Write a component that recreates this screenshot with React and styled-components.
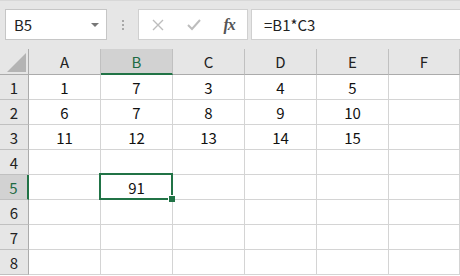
import React from "react";
import styled, { createGlobalStyle } from "styled-components";

const Global = createGlobalStyle`
  html, body { margin: 0; padding: 0; background: #ffffff; overflow: hidden; }
  body { width: 460px; height: 276px; font-family: "Noto Sans CJK JP", "Noto Sans", sans-serif; }
`;

const Page = styled.div`
  width: 460px;
  height: 276px;
  overflow: hidden;
  display: flex;
  flex-direction: column;
`;

const Toolbar = styled.div`
  height: 49px;
  flex: none;
  background: #e6e6e6;
  border-top: 1px solid #d8d8d8;
  box-sizing: border-box;
  display: flex;
  align-items: flex-start;
  padding: 8px 0 0 5px;
`;

const NameBox = styled.div`
  width: 102px;
  height: 31px;
  box-sizing: border-box;
  background: #fff;
  border: 1px solid #c6c6c6;
  display: flex;
  align-items: center;
  justify-content: space-between;
  padding: 0 7px 0 8px;
  font-size: 15px;
  color: #222;
`;

const Arrow = styled.span`
  width: 0;
  height: 0;
  border-left: 4px solid transparent;
  border-right: 4px solid transparent;
  border-top: 4px solid #777;
`;

const Dots = styled.div`
  width: 31px;
  height: 31px;
  display: flex;
  flex-direction: column;
  align-items: center;
  justify-content: center;
  gap: 2px;
  & > span { width: 2px; height: 2px; background: #a8a8a8; }
`;

const ButtonBox = styled.div`
  width: 110px;
  height: 31px;
  box-sizing: border-box;
  background: #fff;
  border: 1px solid #d0d0d0;
  display: flex;
  align-items: center;
  padding-left: 1px;
`;

const Slot = styled.span`
  width: 36px;
  height: 29px;
  display: flex;
  align-items: center;
  justify-content: center;
`;

const Fx = styled.span`
  font-family: "Liberation Serif", serif;
  font-style: italic;
  font-size: 16px;
  color: #555;
  font-weight: bold;
  letter-spacing: -1px;
`;

const FormulaBox = styled.div`
  flex: 1;
  height: 31px;
  margin-left: 3px;
  box-sizing: border-box;
  background: #fff;
  border: 1px solid #d0d0d0;
  border-right: none;
  display: flex;
  align-items: center;
  padding-left: 12px;
  font-size: 15px;
  color: #222;
`;

const Grid = styled.div`
  flex: 1;
  display: grid;
  grid-template-columns: 29px repeat(5, 72px) 1fr;
  grid-template-rows: 26px;
  grid-auto-rows: 25px;
  background: #fff;
`;

const Corner = styled.div`
  background: #e6e6e6;
  border-right: 1px solid #ababab;
  border-bottom: 1px solid #ababab;
  box-sizing: border-box;
  display: flex;
  align-items: flex-end;
  justify-content: flex-end;
  padding: 0 2px 2px 0;
`;

const ColHead = styled.div`
  background: ${(p) => (p.$active ? "#d2d2d2" : "#e6e6e6")};
  color: ${(p) => (p.$active ? "#1e6b43" : "#222")};
  border-right: 1px solid #c0c0c0;
  border-bottom: ${(p) => (p.$active ? "2px solid #217346" : "1px solid #ababab")};
  box-sizing: border-box;
  display: flex;
  align-items: center;
  justify-content: center;
  font-size: 15px;
  padding-top: ${(p) => (p.$active ? "1px" : "0")};
`;

const RowHead = styled.div`
  background: ${(p) => (p.$active ? "#d2d2d2" : "#e6e6e6")};
  color: ${(p) => (p.$active ? "#1e6b43" : "#222")};
  border-right: ${(p) => (p.$active ? "2px solid #217346" : "1px solid #ababab")};
  border-bottom: 1px solid #c0c0c0;
  box-sizing: border-box;
  display: flex;
  align-items: center;
  justify-content: center;
  font-size: 15px;
`;

const Cell = styled.div`
  position: relative;
  border-right: 1px solid #d4d4d4;
  border-bottom: 1px solid #d4d4d4;
  box-sizing: border-box;
  display: flex;
  align-items: center;
  justify-content: center;
  font-size: 15px;
  color: #111;
`;

const Selection = styled.div`
  position: absolute;
  z-index: 2;
  left: -2px;
  top: -2px;
  right: -1px;
  bottom: -1px;
  border: 2px solid #217346;
  pointer-events: none;
`;

const Handle = styled.div`
  position: absolute;
  right: -4px;
  bottom: -4px;
  width: 6px;
  height: 6px;
  background: #217346;
  border: 1px solid #fff;
  border-right: none;
  border-bottom: none;
`;

const cols = ["A", "B", "C", "D", "E", "F"];
const data = [
  [1, 7, 3, 4, 5, ""],
  [6, 7, 8, 9, 10, ""],
  [11, 12, 13, 14, 15, ""],
  ["", "", "", "", "", ""],
  ["", 91, "", "", "", ""],
  ["", "", "", "", "", ""],
  ["", "", "", "", "", ""],
  ["", "", "", "", "", ""],
];

export default function App() {
  return (
    <Page>
      <Global />
      <Toolbar>
        <NameBox>
          <span>B5</span>
          <Arrow />
        </NameBox>
        <Dots>
          <span />
          <span />
          <span />
        </Dots>
        <ButtonBox>
          <Slot>
            <svg width="12" height="12" viewBox="0 0 12 12">
              <path d="M1 1 L11 11 M11 1 L1 11" stroke="#bdbdbd" strokeWidth="1.4" fill="none" />
            </svg>
          </Slot>
          <Slot>
            <svg width="14" height="12" viewBox="0 0 14 12">
              <path d="M1 6 L5 10 L13 1" stroke="#bdbdbd" strokeWidth="2" fill="none" />
            </svg>
          </Slot>
          <Slot>
            <Fx>fx</Fx>
          </Slot>
        </ButtonBox>
        <FormulaBox>=B1*C3</FormulaBox>
      </Toolbar>
      <Grid>
        <Corner>
          <svg width="19" height="19" viewBox="0 0 19 19">
            <path d="M19 0 L19 19 L0 19 Z" fill="#b4b4b4" />
          </svg>
        </Corner>
        {cols.map((c) => (
          <ColHead key={c} $active={c === "B"}>
            {c}
          </ColHead>
        ))}
        {data.map((row, r) => (
          <React.Fragment key={r}>
            <RowHead $active={r === 4}>{r + 1}</RowHead>
            {row.map((v, ci) => (
              <Cell key={ci}>
                {v}
                {r === 4 && ci === 1 && (
                  <Selection>
                    <Handle />
                  </Selection>
                )}
              </Cell>
            ))}
          </React.Fragment>
        ))}
      </Grid>
    </Page>
  );
}
